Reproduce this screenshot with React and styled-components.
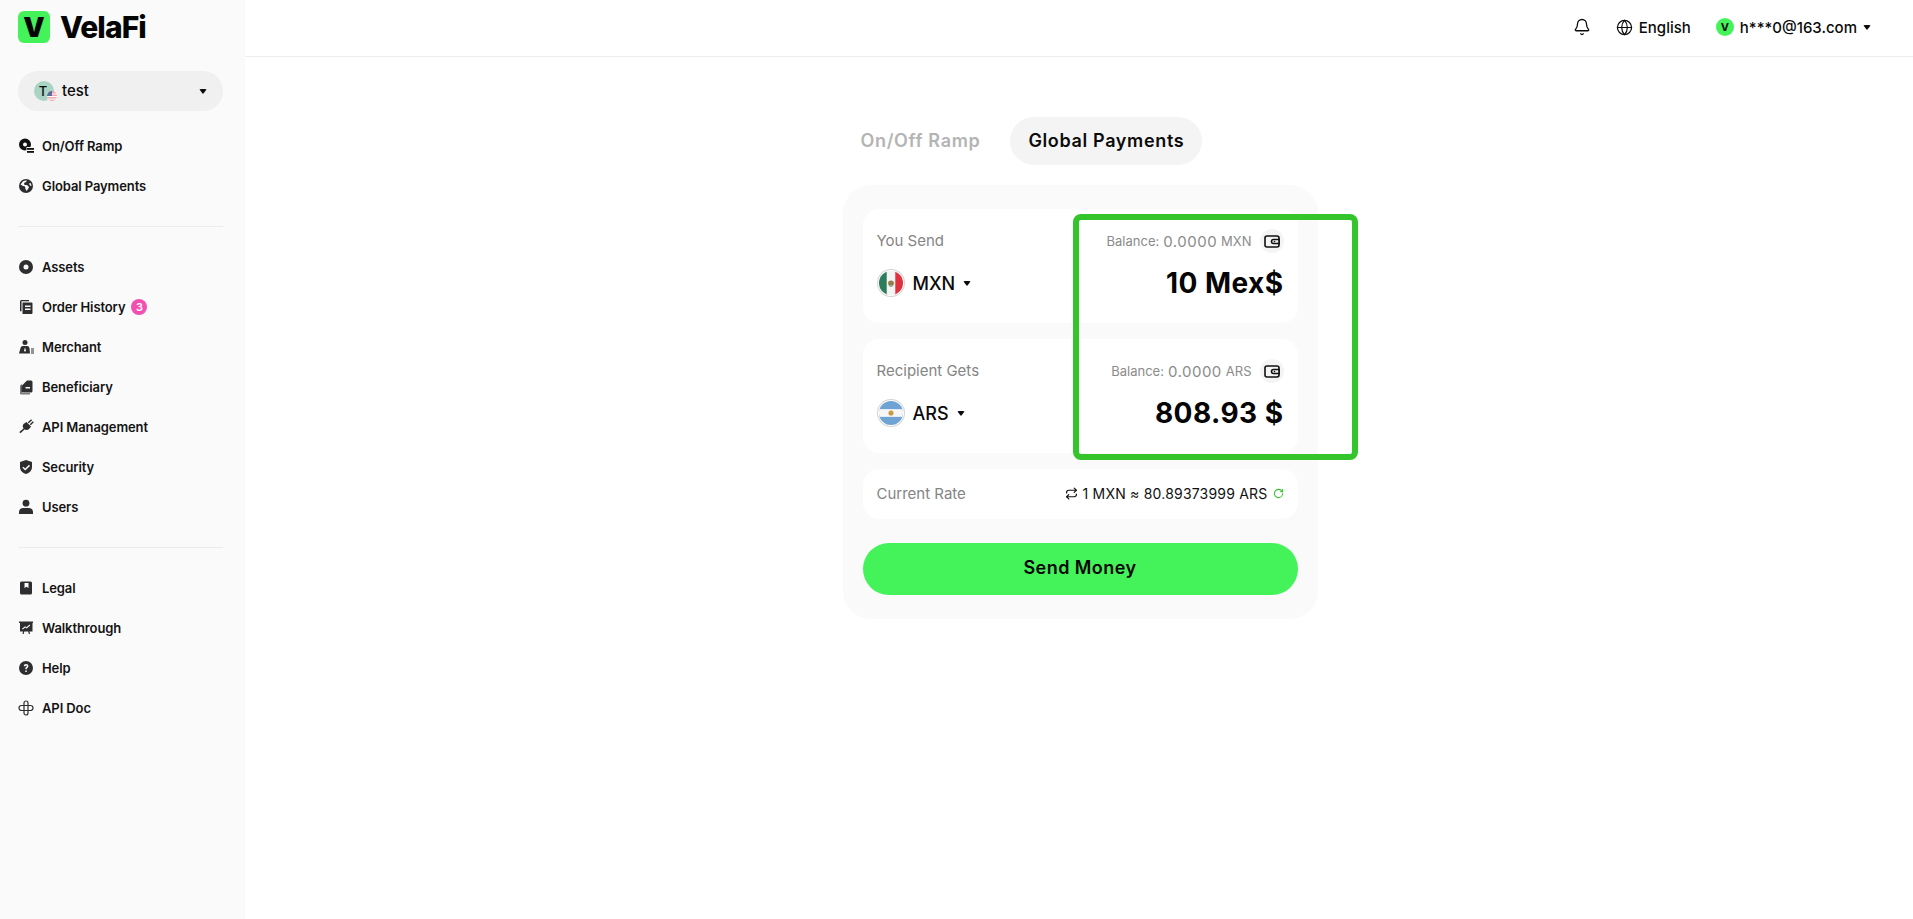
import React from "react";
import styled, { createGlobalStyle } from "styled-components";
import { Bell, Globe, Repeat, RotateCw } from "lucide-react";

const GlobalStyle = createGlobalStyle`
  * { box-sizing: border-box; }
  html, body { margin: 0; padding: 0; background: #fff; }
  body { font-family: Inter, "Noto Sans", sans-serif; color: #0b0b0b; overflow: hidden; }
`;

const Layout = styled.div`
  display: flex;
  height: 919px;
`;

const Sidebar = styled.aside`
  width: 245px;
  flex: none;
  background: #fafafa;
  padding: 11px 22px 0 18px;
`;

const Brand = styled.div`
  display: flex;
  align-items: center;
  gap: 10px;
  height: 32px;
`;

const LogoMark = styled.div`
  width: 32px;
  height: 32px;
  border-radius: 6px;
  background: #44f25a;
  color: #050505;
  display: flex;
  align-items: center;
  justify-content: center;
  font-size: 27px;
  font-weight: 900;
`;

const LogoText = styled.div`
  font-size: 30px;
  font-weight: 800;
  letter-spacing: -0.9px;
  color: #050505;
`;

const AccountPill = styled.div`
  margin-top: 28px;
  height: 40px;
  border-radius: 20px;
  background: #f0f0f0;
  display: flex;
  align-items: center;
  padding: 0 16px;
`;

const AccountAvatar = styled.div`
  position: relative;
  width: 20px;
  height: 20px;
  border-radius: 50%;
  background: #a9d3c3;
  font-size: 13px;
  font-weight: 500;
  display: flex;
  align-items: center;
  justify-content: center;
  padding-right: 2px;
`;

const AvatarFlag = styled.svg`
  position: absolute;
  right: -3px;
  bottom: 0;
  width: 10px;
  height: 10px;
`;

const AccountName = styled.span`
  margin-left: 8px;
  padding-bottom: 2px;
  font-size: 15px;
  font-weight: 500;
  flex: 1;
`;

const Caret = styled.span`
  display: inline-block;
  width: 0;
  height: 0;
  border-left: ${(p) => p.$size || 4.5}px solid transparent;
  border-right: ${(p) => p.$size || 4.5}px solid transparent;
  border-top: ${(p) => (p.$size || 4.5) + 1}px solid #0b0b0b;
  border-radius: 2px;
`;

const NavGroup = styled.nav`
  display: flex;
  flex-direction: column;
`;

const FirstGroup = styled(NavGroup)`
  margin-top: 15px;
`;

const Divider = styled.div`
  height: 1px;
  background: #ececec;
  margin: 20px 0;
`;

const NavItem = styled.div`
  height: 40px;
  display: flex;
  align-items: center;
  font-size: 13px;
  font-weight: 600;
  letter-spacing: -0.1px;
  color: #141414;
`;

const NavIcon = styled.svg`
  width: 16px;
  height: 16px;
  flex: none;
  margin-right: 8px;
  fill: #2e2e30;
`;

const CountBadge = styled.span`
  margin-left: 6px;
  width: 16px;
  height: 16px;
  border-radius: 50%;
  background: #f24fb0;
  color: #fff;
  font-size: 11px;
  font-weight: 600;
  display: flex;
  align-items: center;
  justify-content: center;
`;

const Main = styled.div`
  flex: 1;
  min-width: 0;
  display: flex;
  flex-direction: column;
`;

const Header = styled.header`
  height: 57px;
  flex: none;
  border-bottom: 1px solid #ececec;
  display: flex;
  align-items: center;
  justify-content: flex-end;
  padding: 0 42px 2px 0;
  font-size: 15px;
  font-weight: 500;
`;

const HeaderItem = styled.div`
  display: flex;
  align-items: center;
  gap: ${(p) => p.$gap || 6}px;
  margin-left: ${(p) => p.$left || 0}px;
`;

const UserDot = styled.div`
  width: 18px;
  height: 18px;
  border-radius: 50%;
  background: #44f25a;
  font-size: 11px;
  font-weight: 700;
  display: flex;
  align-items: center;
  justify-content: center;
`;

const Content = styled.main`
  display: flex;
  flex-direction: column;
  align-items: center;
  padding: 60px 0 0 2px;
`;

const Tabs = styled.div`
  width: 475px;
  display: flex;
  align-items: center;
`;

const Tab = styled.div`
  height: 48px;
  padding: 0 18px 2px;
  border-radius: 24px;
  display: flex;
  align-items: center;
  font-size: 18px;
  font-weight: 600;
  letter-spacing: 0.65px;
  color: ${(p) => (p.$active ? "#0b0b0b" : "#b4b4b4")};
  background: ${(p) => (p.$active ? "#f4f4f4" : "transparent")};
  margin-right: ${(p) => (p.$active ? 0 : 12)}px;
`;

const Card = styled.section`
  position: relative;
  width: 475px;
  margin-top: 20px;
  padding: 24px 20px;
  border-radius: 28px;
  background: #fafafa;
  display: flex;
  flex-direction: column;
  gap: 16px;
`;

const AmountRow = styled.div`
  height: 114px;
  border-radius: 16px;
  background: #fff;
  padding: 20px 14px 0;
  display: flex;
  justify-content: space-between;
`;

const Side = styled.div`
  display: flex;
  flex-direction: column;
  align-items: ${(p) => (p.$end ? "flex-end" : "flex-start")};
`;

const FieldLabel = styled.div`
  height: 24px;
  display: flex;
  align-items: center;
  padding-bottom: 2px;
  font-size: 15px;
  color: #858585;
`;

const CurrencyPicker = styled.div`
  margin-top: 16px;
  height: 28px;
  display: flex;
  align-items: center;
  font-size: 18px;
  font-weight: 500;
`;

const Flag = styled.svg`
  width: 24px;
  height: 24px;
  margin: 0 10px 0 2px;
  border-radius: 50%;
  box-shadow: 0 0 0 1px #fff, 0 0 0 2px #d4d4d4;
`;

const CurrencyCode = styled.span`
  margin-right: 8px;
`;

const BalanceLine = styled.div`
  display: flex;
  align-items: center;
  height: 24px;
  font-size: 13px;
  color: #8b8b8b;
`;

const BalanceValue = styled.span`
  font-size: 15px;
  letter-spacing: 0.5px;
  margin: 0 4px;
`;

const WalletButton = styled.div`
  width: 24px;
  height: 24px;
  margin-left: 8px;
  border-radius: 50%;
  background: #f4f4f4;
  display: flex;
  align-items: center;
  justify-content: center;
`;

const Amount = styled.div`
  margin-top: 14px;
  height: 32px;
  display: flex;
  align-items: center;
  font-size: 28px;
  font-weight: 700;
  letter-spacing: 0.45px;
  color: #050505;
`;

const RateRow = styled.div`
  height: 50px;
  border-radius: 16px;
  background: #fff;
  padding: 0 14px;
  display: flex;
  align-items: center;
  justify-content: space-between;
`;

const RateValue = styled.div`
  display: flex;
  align-items: center;
  gap: 5px;
  padding-bottom: 2px;
  font-size: 14px;
  letter-spacing: 0.2px;
  color: #111;
`;

const SendButton = styled.button`
  height: 52px;
  margin-top: 8px;
  padding: 0 0 3px;
  border: 0;
  border-radius: 26px;
  background: #44f25a;
  color: #050505;
  font-family: inherit;
  font-size: 18px;
  font-weight: 600;
  letter-spacing: 0.45px;
`;

const Highlight = styled.div`
  position: absolute;
  left: 230px;
  top: 29px;
  width: 285px;
  height: 246px;
  border: 6px solid #33c52b;
  border-radius: 8px;
  pointer-events: none;
`;

const Wallet = () => (
  <svg width="16" height="13" viewBox="0 0 16 13" fill="none" stroke="#111" strokeWidth="1.6">
    <rect x="1" y="1" width="14" height="11" rx="2" />
    <path d="M9.500 4.500H15v4H9.500a2 2 0 0 1 0-4z" fill="#f4f4f4" />
    <circle cx="10.500" cy="6.500" r="0.8" fill="#111" stroke="none" />
  </svg>
);

const MexicoFlag = () => (
  <Flag viewBox="0 0 28 28">
    <rect width="28" height="28" fill="#f4f4f4" />
    <rect width="9" height="28" fill="#2d7d5c" />
    <rect x="19" width="9" height="28" fill="#e0313f" />
    <ellipse cx="14" cy="14" rx="3.400" ry="3" fill="#9a7a45" />
    <path d="M11 16c1.500 2.500 4.500 2.500 6 0" stroke="#4d8a5a" strokeWidth="1" fill="none" />
  </Flag>
);

const ArgentinaFlag = () => (
  <Flag viewBox="0 0 28 28">
    <rect width="28" height="28" fill="#6fa3d4" />
    <rect y="9.500" width="28" height="9" fill="#f6f6f6" />
    <circle cx="14" cy="14" r="3" fill="#c89a46" />
  </Flag>
);

const navTop = [
  {
    label: "On/Off Ramp",
    icon: (
      <>
        <path fillRule="evenodd" fill="#111" d="M7 0.500a6 6 0 1 1 0 12A6 6 0 0 1 7 0.500zm0 4a2 2 0 1 0 0 4 2 2 0 0 0 0-4z" />
        <rect x="8.500" y="9" width="7.500" height="6.500" fill="#fafafa" />
        <rect x="9" y="10" width="7" height="1.800" fill="#111" />
        <rect x="9" y="13" width="7" height="1.800" fill="#111" />
      </>
    ),
  },
  {
    label: "Global Payments",
    icon: <path fillRule="evenodd" d="M8 1a7 7 0 1 1 0 14A7 7 0 0 1 8 1zM5 3.200 2.500 6.500 5 8l2 .5.500 2.500 1 2 1.500-2 1-2-2-2H6.500L6 5l2-1 1-1.500A5.500 5.500 0 0 0 5 3.200zM12.500 5l-1.500.5 1 2 1.500.5a5.500 5.500 0 0 0-1-3z" />,
  },
];

const navMiddle = [
  {
    label: "Assets",
    icon: <path fillRule="evenodd" d="M8 1a7 7 0 1 1 0 14A7 7 0 0 1 8 1zm0 4.500a2.500 2.500 0 1 0 0 5 2.500 2.500 0 0 0 0-5z" />,
  },
  {
    label: "Order History",
    badge: 3,
    icon: <path fillRule="evenodd" d="M2 2.500A1.500 1.500 0 0 1 3.500 1H11v1.200H3.500v10H2zM4.500 3.500h9A1 1 0 0 1 14.500 4.500V14a1 1 0 0 1-1 1h-9zM7 6.500V8h5.500V6.500zm0 3V11h5.500V9.500z" />,
  },
  {
    label: "Merchant",
    icon: (
      <>
        <circle cx="7" cy="3.500" r="2.500" />
        <path fillRule="evenodd" d="M1 14.500 2.500 9a2.500 2.500 0 0 1 2.500-2h4a2.500 2.500 0 0 1 2.500 2l.5 5.500zM7 8.500l-1 3 1 1.500 1-1.500z" />
        <rect x="13" y="9.500" width="3" height="1" />
        <rect x="13" y="11.500" width="3" height="1" />
        <rect x="13" y="13.500" width="3" height="1" />
      </>
    ),
  },
  {
    label: "Beneficiary",
    icon: (
      <>
        <path fill="#7c7c7c" d="M2 6.500 4 5v9h8v1.500H3A1 1 0 0 1 2 14.500z" />
        <path fillRule="evenodd" d="M9 1.500h4a1.500 1.500 0 0 1 1.500 1.500v9A1.500 1.500 0 0 1 13 13.500H5a1.500 1.500 0 0 1-1.500-1.500V7zM7.500 8v1.500h4.500V8z" />
      </>
    ),
  },
  {
    label: "API Management",
    icon: (
      <>
        <path d="M8.500 3l4.500 4.500-1.500 2a4 4 0 0 1-5.500.5 4 4 0 0 1-.5-5z" />
        <path d="M5.800 9.300l1 1-4.300 4-1.200-1.200zM10.800 4.300l-1-1 3.300-3 1 1zM12.800 6.300l-1-1 3-3 1 1z" />
      </>
    ),
  },
  {
    label: "Security",
    icon: <path fillRule="evenodd" d="M8 1l6 2v5c0 3.500-2.500 6-6 7-3.500-1-6-3.500-6-7V3zm3 4.800L7.200 9.400 5.400 7.700 4.400 8.800l2.800 2.700 4.800-4.600z" />,
  },
  {
    label: "Users",
    icon: (
      <>
        <circle cx="8" cy="4.200" r="3.400" />
        <path d="M1 15v-2.200C1 10.500 3 9 5 9h6c2 0 4 1.500 4 3.800V15z" />
      </>
    ),
  },
];

const navBottom = [
  {
    label: "Legal",
    icon: <path fillRule="evenodd" d="M3.500 1.500h9A1.500 1.500 0 0 1 14 3v10a1.500 1.500 0 0 1-1.500 1.500h-9A1.500 1.500 0 0 1 2 13V3a1.500 1.500 0 0 1 1.500-1.500zM6.500 3v5L8.500 6.800 10.500 8V3z" />,
  },
  {
    label: "Walkthrough",
    icon: <path fillRule="evenodd" d="M1 1.500h14V3h-.5v8.500h-3l.5 2.500h-1.200l-.6-2.500H6.300L5.700 14H4.500L5 11.500H2V3h-1zM4 8.800l.8.800 2.400-2 1.500 1 3.500-3.200-.7-.8-2.900 2.600-1.500-1z" />,
  },
  {
    label: "Help",
    icon: <path fillRule="evenodd" d="M8 1a7 7 0 1 1 0 14A7 7 0 0 1 8 1zM5.800 6.300h1.500c0-.5.300-.9.800-.9s.8.300.8.700c0 .4-.2.600-.7 1-.6.500-.9.900-.9 1.800v.3h1.400v-.2c0-.5.200-.7.700-1.100.6-.5 1-1 1-1.800C10.400 5 9.500 4.100 8 4.100c-1.400 0-2.200.900-2.200 2.200zM7.300 10.500v1.400h1.500v-1.400z" />,
  },
  {
    label: "API Doc",
    icon: (
      <g fill="none" stroke="#2e2e30" strokeWidth="1.200">
        <path d="M6 5.500V3a2 2 0 0 1 4 0v2.500h2.500a2 2 0 0 1 0 5H10v2.500a2 2 0 0 1-4 0v-2.500H3.500a2 2 0 0 1 0-5z" />
        <path d="M6 5.500h4v5H6z" />
      </g>
    ),
  },
];

const NavList = ({ items }) =>
  items.map((item) => (
    <NavItem key={item.label}>
      <NavIcon viewBox="0 0 16 16">{item.icon}</NavIcon>
      {item.label}
      {item.badge && <CountBadge>{item.badge}</CountBadge>}
    </NavItem>
  ));

const App = () => {
  return (
    <Layout>
      <GlobalStyle />
      <Sidebar>
        <Brand>
          <LogoMark>V</LogoMark>
          <LogoText>VelaFi</LogoText>
        </Brand>

        <AccountPill>
          <AccountAvatar>
            T
            <AvatarFlag viewBox="0 0 10 10">
              <circle cx="5" cy="5" r="5" fill="#f3a9ad" />
              <path d="M0 3h10M0 5.500h10M0 8h10" stroke="#fff" strokeWidth="1" />
              <path d="M5 0a5 5 0 0 0-5 5h5z" fill="#5b6d9c" />
            </AvatarFlag>
          </AccountAvatar>
          <AccountName>test</AccountName>
          <Caret $size={4} />
        </AccountPill>

        <FirstGroup>
          <NavList items={navTop} />
        </FirstGroup>
        <Divider />
        <NavGroup>
          <NavList items={navMiddle} />
        </NavGroup>
        <Divider />
        <NavGroup>
          <NavList items={navBottom} />
        </NavGroup>
      </Sidebar>

      <Main>
        <Header>
          <HeaderItem>
            <Bell size={18} strokeWidth={1.7} />
          </HeaderItem>
          <HeaderItem $left={25}>
            <Globe size={17} strokeWidth={1.7} />
            English
          </HeaderItem>
          <HeaderItem $left={25} $gap={6}>
            <UserDot>V</UserDot>
            h***0@163.com
            <Caret />
          </HeaderItem>
        </Header>

        <Content>
          <Tabs>
            <Tab>On/Off Ramp</Tab>
            <Tab $active>Global Payments</Tab>
          </Tabs>

          <Card>
            <AmountRow>
              <Side>
                <FieldLabel>You Send</FieldLabel>
                <CurrencyPicker>
                  <MexicoFlag />
                  <CurrencyCode>MXN</CurrencyCode>
                  <Caret />
                </CurrencyPicker>
              </Side>
              <Side $end>
                <BalanceLine>
                  Balance:<BalanceValue>0.0000</BalanceValue>MXN
                  <WalletButton>
                    <Wallet />
                  </WalletButton>
                </BalanceLine>
                <Amount>10 Mex$</Amount>
              </Side>
            </AmountRow>

            <AmountRow>
              <Side>
                <FieldLabel>Recipient Gets</FieldLabel>
                <CurrencyPicker>
                  <ArgentinaFlag />
                  <CurrencyCode>ARS</CurrencyCode>
                  <Caret />
                </CurrencyPicker>
              </Side>
              <Side $end>
                <BalanceLine>
                  Balance:<BalanceValue>0.0000</BalanceValue>ARS
                  <WalletButton>
                    <Wallet />
                  </WalletButton>
                </BalanceLine>
                <Amount>808.93 $</Amount>
              </Side>
            </AmountRow>

            <RateRow>
              <FieldLabel>Current Rate</FieldLabel>
              <RateValue>
                <Repeat size={13} strokeWidth={2.2} />
                1 MXN ≈ 80.89373999 ARS
                <RotateCw size={11} strokeWidth={2.2} color="#33c52b" />
              </RateValue>
            </RateRow>

            <SendButton>Send Money</SendButton>
            <Highlight />
          </Card>
        </Content>
      </Main>
    </Layout>
  );
};

export default App;
